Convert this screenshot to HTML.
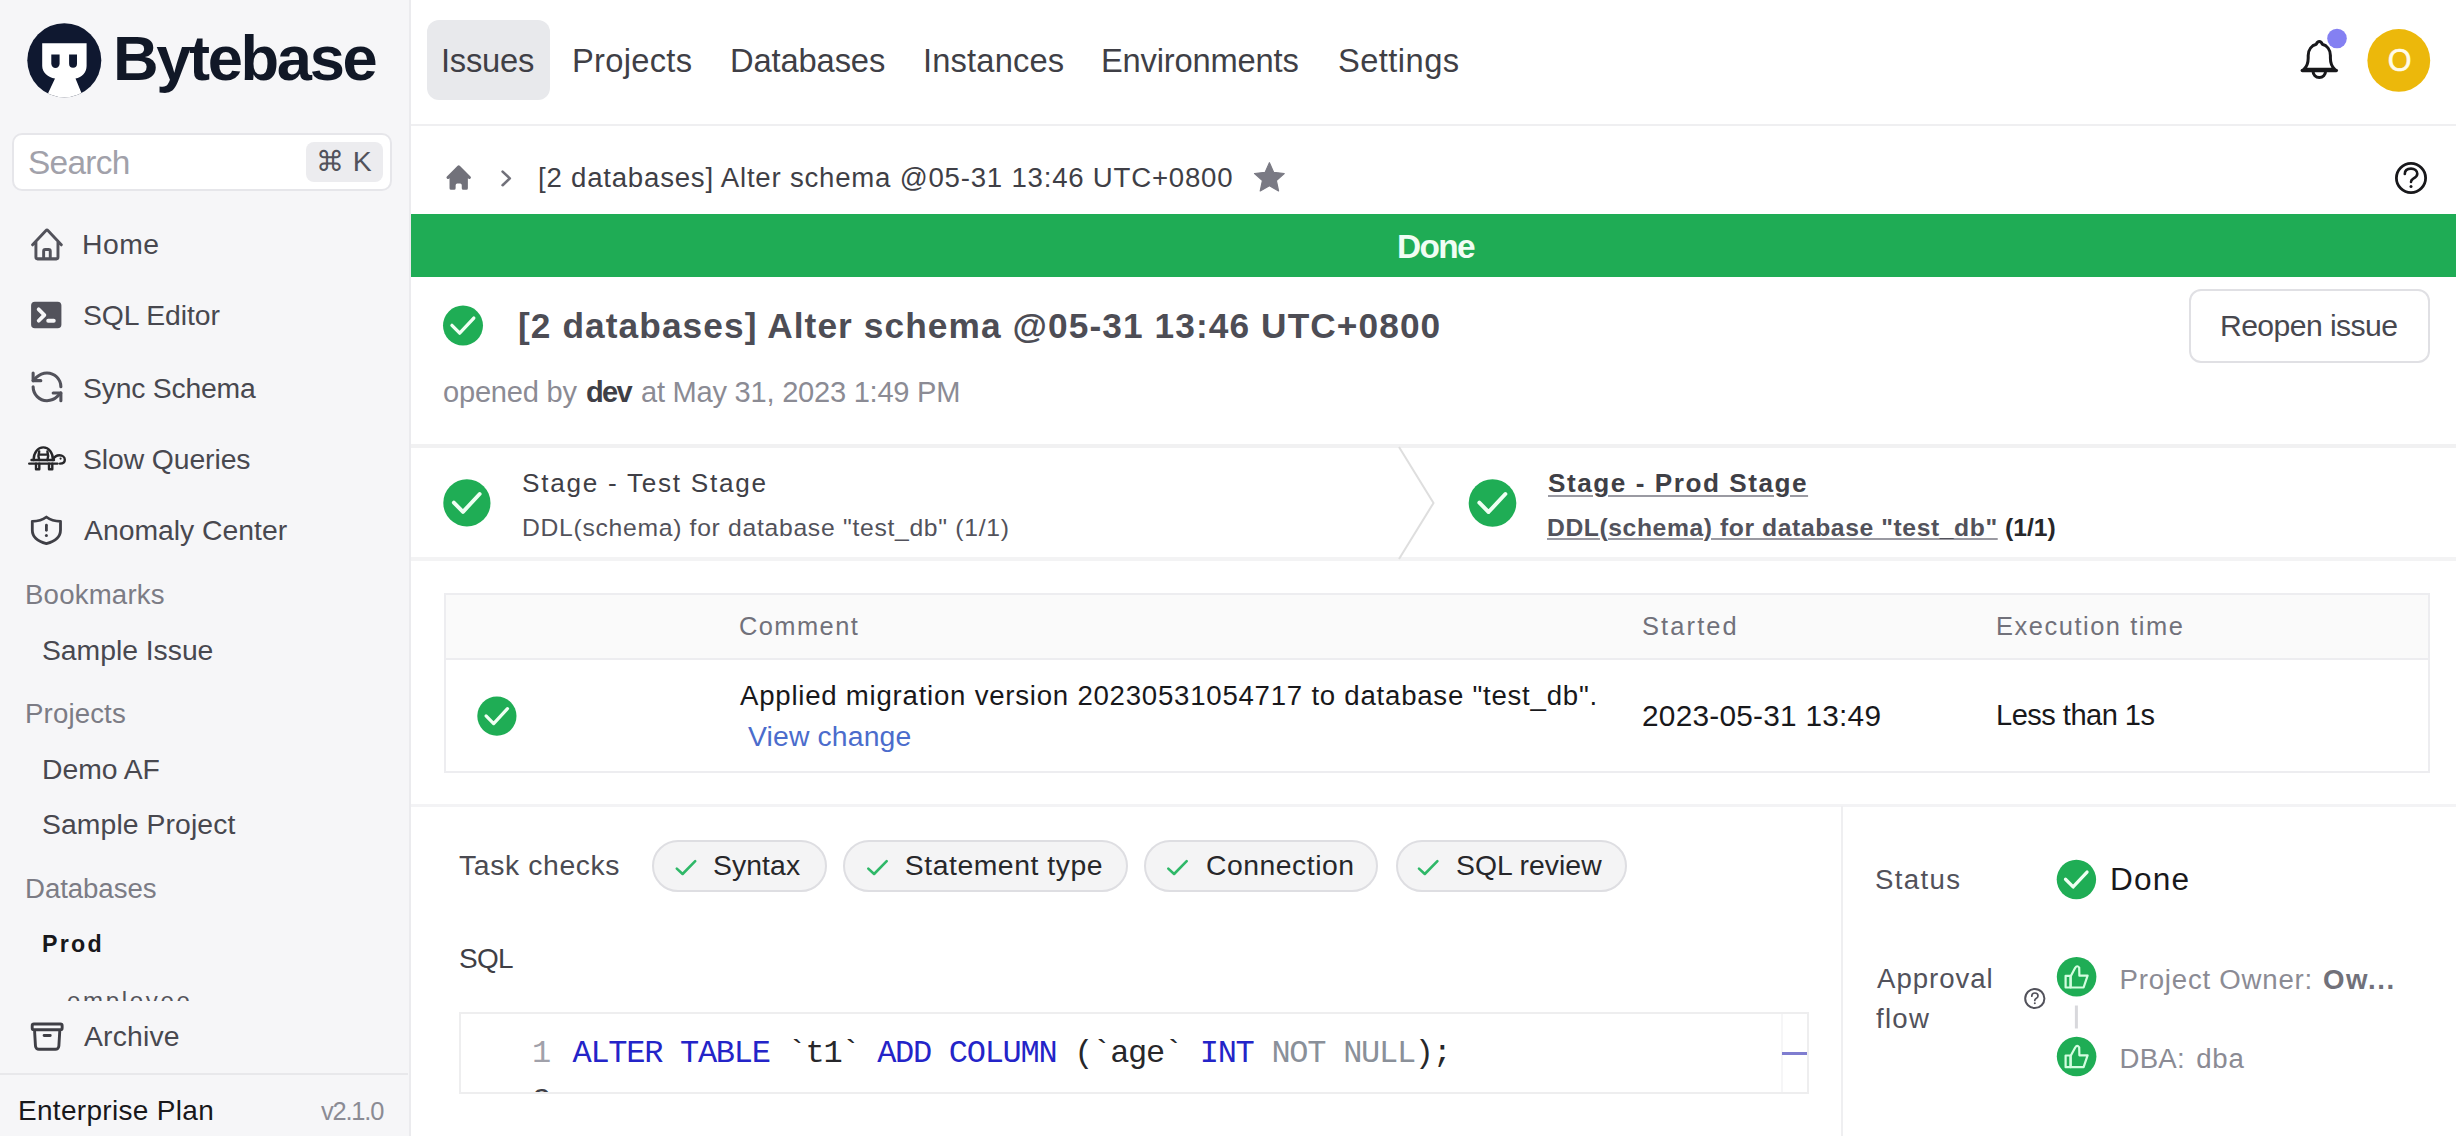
<!DOCTYPE html>
<html><head><meta charset="utf-8"><title>Bytebase</title>
<style>
html,body{margin:0;padding:0;}
body{width:2456px;height:1136px;overflow:hidden;position:relative;background:#fff;font-family:"Liberation Sans",sans-serif;}
.t{position:absolute;white-space:nowrap;line-height:1;z-index:2;}
.b{position:absolute;box-sizing:border-box;}
.mono{font-family:"Liberation Mono",monospace;}
#ov{position:absolute;left:0;top:0;z-index:1;}
</style></head><body>
<!-- sidebar -->
<div class="b" style="left:0;top:0;width:411px;height:1136px;background:#f6f6f8;border-right:2px solid #ebebee;"></div>
<div class="b" style="left:12px;top:133px;width:380px;height:58px;background:#fff;border:2px solid #e6e6ea;border-radius:10px;"></div>
<div class="b" style="left:306px;top:142px;width:77px;height:40px;background:#ececef;border-radius:8px;"></div>
<div class="b" style="left:0;top:1073px;width:408px;height:2px;background:#e8e8eb;"></div>
<!-- header -->
<div class="b" style="left:411px;top:124px;width:2045px;height:2px;background:#efeff1;"></div>
<div class="b" style="left:427px;top:20px;width:123px;height:80px;background:#e8e9ec;border-radius:12px;"></div>
<!-- banner -->
<div class="b" style="left:411px;top:214px;width:2045px;height:63px;background:#1fac55;"></div>
<!-- reopen button -->
<div class="b" style="left:2189px;top:289px;width:241px;height:74px;border:2px solid #e0e0e4;border-radius:12px;"></div>
<!-- stage bar borders -->
<div class="b" style="left:411px;top:444px;width:2045px;height:4px;background:#f1f1f2;"></div>
<div class="b" style="left:411px;top:557px;width:2045px;height:4px;background:#f3f3f4;"></div>
<!-- table -->
<div class="b" style="left:444px;top:593px;width:1986px;height:180px;border:2px solid #ededf0;"></div>
<div class="b" style="left:446px;top:595px;width:1982px;height:63px;background:#fafafa;"></div>
<div class="b" style="left:446px;top:658px;width:1982px;height:2px;background:#ededf0;"></div>
<!-- bottom section -->
<div class="b" style="left:411px;top:804px;width:2045px;height:3px;background:#f3f3f5;"></div>
<div class="b" style="left:1841px;top:806px;width:2px;height:330px;background:#efeff1;"></div>
<!-- pills -->
<div class="b" style="left:652px;top:840px;width:175px;height:52px;background:#f4f4f5;border:2px solid #dedee2;border-radius:26px;"></div>
<div class="b" style="left:843px;top:840px;width:285px;height:52px;background:#f4f4f5;border:2px solid #dedee2;border-radius:26px;"></div>
<div class="b" style="left:1144px;top:840px;width:234px;height:52px;background:#f4f4f5;border:2px solid #dedee2;border-radius:26px;"></div>
<div class="b" style="left:1396px;top:840px;width:231px;height:52px;background:#f4f4f5;border:2px solid #dedee2;border-radius:26px;"></div>
<!-- code box -->
<div class="b" style="left:459px;top:1012px;width:1350px;height:82px;border:2px solid #eeeeef;border-bottom:none;overflow:hidden;">
  <div class="b" style="left:1320px;top:0;width:2px;height:82px;background:#f6f6f7;"></div>
  <div class="b" style="left:1321px;top:38px;width:27px;height:3px;background:#7f7dd0;"></div>
</div>
<div class="b" style="left:459px;top:1092px;width:1350px;height:2px;background:#eeeeef;"></div>
<div id="logo" class="t" style="left:113.00px;top:27.48px;font-size:63.23px;color:#111827;font-weight:700;letter-spacing:-2.357px;">Bytebase</div>
<div id="search" class="t" style="left:28.00px;top:145.70px;font-size:33.43px;color:#a1a1aa;font-weight:400;letter-spacing:-0.700px;">Search</div>
<div id="home" class="t" style="left:82.00px;top:230.01px;font-size:28.34px;color:#48484f;font-weight:400;letter-spacing:0.500px;">Home</div>
<div id="sqled" class="t" style="left:83.00px;top:301.01px;font-size:28.34px;color:#48484f;font-weight:400;letter-spacing:-0.056px;">SQL Editor</div>
<div id="sync" class="t" style="left:83.00px;top:373.51px;font-size:28.34px;color:#48484f;font-weight:400;letter-spacing:-0.200px;">Sync Schema</div>
<div id="slow" class="t" style="left:83.00px;top:445.01px;font-size:28.34px;color:#48484f;font-weight:400;letter-spacing:-0.091px;">Slow Queries</div>
<div id="anom" class="t" style="left:84.00px;top:516.01px;font-size:28.34px;color:#48484f;font-weight:400;letter-spacing:0.000px;">Anomaly Center</div>
<div id="bkm" class="t" style="left:25.00px;top:580.62px;font-size:27.62px;color:#7c7c85;font-weight:400;letter-spacing:0.188px;">Bookmarks</div>
<div id="sissue" class="t" style="left:42.00px;top:636.01px;font-size:28.34px;color:#48484f;font-weight:400;letter-spacing:-0.023px;">Sample Issue</div>
<div id="projh" class="t" style="left:25.00px;top:699.62px;font-size:27.62px;color:#7c7c85;font-weight:400;letter-spacing:0.143px;">Projects</div>
<div id="demoaf" class="t" style="left:42.00px;top:755.01px;font-size:28.34px;color:#48484f;font-weight:400;letter-spacing:-0.042px;">Demo AF</div>
<div id="sproj" class="t" style="left:42.00px;top:810.01px;font-size:28.34px;color:#48484f;font-weight:400;letter-spacing:0.096px;">Sample Project</div>
<div id="dbh" class="t" style="left:25.00px;top:874.62px;font-size:27.62px;color:#7c7c85;font-weight:400;letter-spacing:-0.062px;">Databases</div>
<div id="prod" class="t" style="left:42.00px;top:933.31px;font-size:23.26px;color:#18181b;font-weight:700;letter-spacing:2.250px;">Prod</div>
<div id="archive" class="t" style="left:84.00px;top:1021.76px;font-size:28.34px;color:#48484f;font-weight:400;letter-spacing:0.167px;">Archive</div>
<div id="plan" class="t" style="left:18.00px;top:1097.06px;font-size:27.98px;color:#18181b;font-weight:400;letter-spacing:0.321px;">Enterprise Plan</div>
<div id="ver" class="t" style="left:321.00px;top:1099.22px;font-size:25.44px;color:#8b8b94;font-weight:400;letter-spacing:-1.200px;">v2.1.0</div>
<div id="n1" class="t" style="left:441.00px;top:44.82px;font-size:32.70px;color:#3f3f46;font-weight:400;letter-spacing:-0.250px;">Issues</div>
<div id="n2" class="t" style="left:572.00px;top:44.82px;font-size:32.70px;color:#3f3f46;font-weight:400;letter-spacing:0.286px;">Projects</div>
<div id="n3" class="t" style="left:730.00px;top:44.82px;font-size:32.70px;color:#3f3f46;font-weight:400;letter-spacing:-0.125px;">Databases</div>
<div id="n4" class="t" style="left:923.00px;top:44.82px;font-size:32.70px;color:#3f3f46;font-weight:400;letter-spacing:0.156px;">Instances</div>
<div id="n5" class="t" style="left:1101.00px;top:44.82px;font-size:32.70px;color:#3f3f46;font-weight:400;letter-spacing:-0.182px;">Environments</div>
<div id="n6" class="t" style="left:1338.00px;top:44.82px;font-size:32.70px;color:#3f3f46;font-weight:400;letter-spacing:0.429px;">Settings</div>
<div id="crumb" class="t" style="left:538.00px;top:163.62px;font-size:27.62px;color:#3f3f46;font-weight:400;letter-spacing:0.777px;">[2 databases] Alter schema @05-31 13:46 UTC+0800</div>
<div id="banner" class="t" style="left:1397.00px;top:229.70px;font-size:33.43px;color:#f0fdf4;font-weight:700;letter-spacing:-1.667px;">Done</div>
<div id="title" class="t" style="left:518.00px;top:307.91px;font-size:35.25px;color:#4d4d55;font-weight:700;letter-spacing:1.096px;">[2 databases] Alter schema @05-31 13:46 UTC+0800</div>
<div id="op1" class="t" style="left:443.00px;top:378.14px;font-size:29.07px;color:#8b8b94;font-weight:400;letter-spacing:-0.219px;">opened by</div>
<div id="op2" class="t" style="left:586.00px;top:378.14px;font-size:29.07px;color:#3f3f46;font-weight:700;letter-spacing:-1.750px;">dev</div>
<div id="op3" class="t" style="left:641.00px;top:378.14px;font-size:29.07px;color:#8b8b94;font-weight:400;letter-spacing:-0.239px;">at May 31, 2023 1:49 PM</div>
<div id="reopen" class="t" style="left:2220.00px;top:310.72px;font-size:30.16px;color:#48484f;font-weight:400;letter-spacing:-0.591px;">Reopen issue</div>
<div id="st1" class="t" style="left:522.00px;top:469.85px;font-size:26.16px;color:#3f3f46;font-weight:400;letter-spacing:1.721px;">Stage - Test Stage</div>
<div id="st1d" class="t" style="left:522.00px;top:515.58px;font-size:24.71px;color:#52525b;font-weight:400;letter-spacing:0.699px;">DDL(schema) for database "test_db" (1/1)</div>
<div id="st2" class="t" style="left:1548.00px;top:469.85px;font-size:26.16px;color:#3f3f46;font-weight:700;letter-spacing:1.529px;text-decoration:underline;text-decoration-thickness:2px;text-underline-offset:3px;text-decoration-color:#9a9aa2;">Stage - Prod Stage</div>
<div id="st2d" class="t" style="left:1547.00px;top:515.58px;font-size:24.71px;color:#52525b;font-weight:700;letter-spacing:0.576px;text-decoration:underline;text-decoration-thickness:2px;text-underline-offset:2px;text-decoration-color:#9a9aa2;">DDL(schema) for database "test_db"</div>
<div id="st2n" class="t" style="left:2005.00px;top:515.58px;font-size:24.71px;color:#27272a;font-weight:700;letter-spacing:0.000px;">(1/1)</div>
<div id="th1" class="t" style="left:739.00px;top:613.97px;font-size:25.44px;color:#71717a;font-weight:400;letter-spacing:1.417px;">Comment</div>
<div id="th2" class="t" style="left:1642.00px;top:613.97px;font-size:25.44px;color:#71717a;font-weight:400;letter-spacing:2.125px;">Started</div>
<div id="th3" class="t" style="left:1996.00px;top:613.97px;font-size:25.44px;color:#71717a;font-weight:400;letter-spacing:1.538px;">Execution time</div>
<div id="td1" class="t" style="left:740.00px;top:682.12px;font-size:27.62px;color:#18181b;font-weight:400;letter-spacing:0.758px;">Applied migration version 20230531054717 to database "test_db".</div>
<div id="td1b" class="t" style="left:748.00px;top:721.51px;font-size:28.34px;color:#4b6ccc;font-weight:400;letter-spacing:0.150px;">View change</div>
<div id="td2" class="t" style="left:1642.00px;top:700.78px;font-size:29.80px;color:#18181b;font-weight:400;letter-spacing:0.250px;">2023-05-31 13:49</div>
<div id="td3" class="t" style="left:1996.00px;top:701.39px;font-size:29.07px;color:#18181b;font-weight:400;letter-spacing:-0.523px;">Less than 1s</div>
<div id="tc" class="t" style="left:459.00px;top:851.01px;font-size:28.34px;color:#4b4b52;font-weight:400;letter-spacing:0.625px;">Task checks</div>
<div id="p1" class="t" style="left:713.00px;top:851.01px;font-size:28.34px;color:#27272a;font-weight:400;letter-spacing:0.100px;">Syntax</div>
<div id="p2" class="t" style="left:904.80px;top:851.01px;font-size:28.34px;color:#27272a;font-weight:400;letter-spacing:0.554px;">Statement type</div>
<div id="p3" class="t" style="left:1206.00px;top:851.01px;font-size:28.34px;color:#27272a;font-weight:400;letter-spacing:0.528px;">Connection</div>
<div id="p4" class="t" style="left:1456.00px;top:851.01px;font-size:28.34px;color:#27272a;font-weight:400;letter-spacing:0.028px;">SQL review</div>
<div id="sql" class="t" style="left:459.00px;top:945.06px;font-size:27.98px;color:#3f3f46;font-weight:400;letter-spacing:-0.750px;">SQL</div>
<div id="status" class="t" style="left:1875.00px;top:866.12px;font-size:27.62px;color:#52525b;font-weight:400;letter-spacing:1.350px;">Status</div>
<div id="done" class="t" style="left:2110.00px;top:863.99px;font-size:31.61px;color:#18181b;font-weight:400;letter-spacing:1.167px;">Done</div>
<div id="appr" class="t" style="left:1877.00px;top:964.87px;font-size:27.62px;color:#52525b;font-weight:400;letter-spacing:0.964px;">Approval</div>
<div id="flow" class="t" style="left:1876.00px;top:1004.87px;font-size:27.62px;color:#52525b;font-weight:400;letter-spacing:1.250px;">flow</div>
<div id="po1" class="t" style="left:2119.60px;top:965.62px;font-size:27.62px;color:#8b8b94;font-weight:400;letter-spacing:0.769px;">Project Owner:</div>
<div id="po2" class="t" style="left:2323.00px;top:965.62px;font-size:27.62px;color:#71717a;font-weight:700;letter-spacing:1.562px;">Ow...</div>
<div id="dba1" class="t" style="left:2119.60px;top:1045.02px;font-size:27.62px;color:#8b8b94;font-weight:400;letter-spacing:0.200px;">DBA:</div>
<div id="dba2" class="t" style="left:2196.20px;top:1045.02px;font-size:27.62px;color:#8b8b94;font-weight:400;letter-spacing:0.800px;">dba</div>
<div id="kbd" class="t" style="left:316.00px;top:147.01px;font-size:28.34px;color:#52525b;font-weight:400;letter-spacing:0.500px;">⌘ K</div>
<div id="avatar" class="t" style="left:2387.80px;top:45.16px;font-size:30.52px;color:#fffbea;font-weight:400;letter-spacing:0.000px;-webkit-text-stroke:0.6px #fffbea;">O</div>
<div id="employee" class="t" style="left:67.00px;top:988.54px;font-size:24.05px;color:#55555c;font-weight:400;letter-spacing:2.643px;">employee</div>
<div class="t mono" style="left:572.5px;top:1038.48px;font-size:32.000px;letter-spacing:-1.283px"><span style="color:#2424c8">ALTER</span><span style="color:#000">&nbsp;</span><span style="color:#2424c8">TABLE</span><span style="color:#27272a">&nbsp;`t1`&nbsp;</span><span style="color:#2424c8">ADD</span><span style="color:#000">&nbsp;</span><span style="color:#2424c8">COLUMN</span><span style="color:#27272a">&nbsp;(`age`&nbsp;</span><span style="color:#2424c8">INT</span><span style="color:#000">&nbsp;</span><span style="color:#8a9099">NOT&nbsp;NULL</span><span style="color:#27272a">);</span></div><div class="t mono" style="left:532px;top:1038.48px;font-size:32.000px;color:#a1a1aa">1</div><div class="b" style="left:520px;top:1080px;width:60px;height:12px;overflow:hidden;z-index:2"><div class="t mono" style="left:12px;top:5.98px;font-size:32.000px;color:#3f3f46">2</div></div>
<div class="b" style="left:0;top:1001px;width:408px;height:14px;background:#f6f6f8;z-index:3;"></div>
<svg id="ov" width="2456" height="1136" viewBox="0 0 2456 1136">
<!-- logo -->
<defs><clipPath id="lc"><circle cx="64.3" cy="60.3" r="37"/></clipPath></defs>
<circle cx="64.3" cy="60.3" r="37" fill="#0f1830"/>
<path clip-path="url(#lc)" d="M42.2,43.2 H86.6 V66 C86.6,72.5 82,77.5 75.5,78.5 L86,104 H43 L55,78.5 C48,77.5 42.2,72.5 42.2,66 Z" fill="#ffffff"/>
<path d="M51.3,54.6 H59.6 V63.8 A4.15,4.15 0 0 1 51.3,63.8 Z" fill="#0f1830"/>
<path d="M69.1,54.6 H77 V63.8 A3.95,3.95 0 0 1 69.1,63.8 Z" fill="#0f1830"/>
<!-- sidebar icons -->
<svg x="29.3" y="226" width="35.3" height="37.5" viewBox="0 0 24 24" preserveAspectRatio="none" fill="none" stroke="#52525b" stroke-width="2" stroke-linecap="round" stroke-linejoin="round"><path d="m2.25 12 8.954-8.955c.44-.439 1.152-.439 1.591 0L21.75 12M4.5 9.75v10.125c0 .621.504 1.125 1.125 1.125H9.75v-4.875c0-.621.504-1.125 1.125-1.125h2.25c.621 0 1.125.504 1.125 1.125V21h4.125c.621 0 1.125-.504 1.125-1.125V9.75M8.25 21h8.25"/></svg>
<svg x="27.3" y="296.1" width="37.9" height="37.9" viewBox="0 0 20 20" fill="#52525b"><path fill-rule="evenodd" d="M2 5a2 2 0 012-2h12a2 2 0 012 2v10a2 2 0 01-2 2H4a2 2 0 01-2-2V5zm3.293 1.293a1 1 0 011.414 0l3 3a1 1 0 010 1.414l-3 3a1 1 0 01-1.414-1.414L7.586 10 5.293 7.707a1 1 0 010-1.414zM11 12a1 1 0 100 2h3a1 1 0 100-2h-3z"/></svg>
<svg x="28.5" y="368.3" width="37" height="37" viewBox="0 0 24 24" fill="none" stroke="#52525b" stroke-width="2" stroke-linecap="round" stroke-linejoin="round"><path d="M21 12a9 9 0 0 0-9-9 9.75 9.75 0 0 0-6.74 2.74L3 8"/><path d="M3 3v5h5"/><path d="M3 12a9 9 0 0 0 9 9 9.75 9.75 0 0 0 6.74-2.74L21 16"/><path d="M16 16h5v5"/></svg>
<g fill="none" stroke="#27272a" stroke-width="2.4" stroke-linecap="round" stroke-linejoin="round">
 <path d="M33.6,460 C33.6,452.5 37.8,447.4 43.3,447.4 C48.8,447.4 53,452.5 53,460"/>
 <path d="M31.5,460 H54"/>
 <path d="M39.2,451.5 Q37.8,455.5 39.2,460 M47.4,451.5 Q48.8,455.5 47.4,460 M39.2,454.6 H47.4"/>
 <path d="M29.2,463.6 H57.5"/>
 <path d="M53,459.5 C54.5,456.5 56.5,455.3 59.5,455.3 C62.6,455.3 64.8,457.3 64.8,459.8 C64.8,462.2 62.8,463.6 60,463.6"/>
 <path d="M36,463.6 V469.3 H39.3 V463.6 M49,463.6 V469.3 H52.3 V463.6"/>
</g>
<circle cx="60.6" cy="458.6" r="1.1" fill="#27272a"/>
<g fill="none" stroke="#3f3f46" stroke-width="2.8" stroke-linecap="round" stroke-linejoin="round">
 <path d="M46.4,517 C42.5,520 37.5,521.3 32.3,521.3 V530 C32.3,537 38,541.5 46.4,543.6 C54.8,541.5 60.5,537 60.5,530 V521.3 C55.3,521.3 50.3,520 46.4,517 Z"/>
 <path d="M46.4,525.2 V530.3"/>
</g>
<circle cx="46.4" cy="535.6" r="1.5" fill="#3f3f46"/>
<svg x="28.75" y="1018.2" width="36.84" height="36.84" viewBox="0 0 24 24" fill="none" stroke="#3f3f46" stroke-width="1.9" stroke-linecap="round" stroke-linejoin="round"><path d="m20.25 7.5-.625 10.632a2.25 2.25 0 0 1-2.247 2.118H6.622a2.25 2.25 0 0 1-2.247-2.118L3.75 7.5M10 11.25h4M3.375 7.5h17.25c.621 0 1.125-.504 1.125-1.125v-1.5c0-.621-.504-1.125-1.125-1.125H3.375c-.621 0-1.125.504-1.125 1.125v1.5c0 .621.504 1.125 1.125 1.125Z"/></svg>
<!-- header icons -->
<g fill="none" stroke="#18181b" stroke-width="3" stroke-linecap="round" stroke-linejoin="round">
 <path d="M2303.8,69.3 C2306.8,66.8 2308.2,62.8 2308.2,58 V55.5 C2308.2,49.5 2311.8,45.5 2316.3,44.3 C2317,42.3 2318,41.6 2319.3,41.6 C2320.6,41.6 2321.6,42.3 2322.3,44.3 C2326.8,45.5 2330.4,49.5 2330.4,55.5 V58 C2330.4,62.8 2331.8,66.8 2334.8,69.3 Z"/>
 <path d="M2313,71 A6.3,6.6 0 0 0 2325.6,71"/>
</g>
<path d="M2302.3,70.5 H2336.3" stroke="#18181b" stroke-width="3.4" stroke-linecap="round"/>
<circle cx="2337" cy="38.5" r="9.8" fill="#8480f2"/>
<circle cx="2398.8" cy="60.4" r="31.4" fill="#ecb80b"/>
<!-- breadcrumb icons -->
<svg x="443.4" y="162.2" width="30.6" height="30.6" viewBox="0 0 20 20" fill="#71717a"><path d="M10.707 2.293a1 1 0 00-1.414 0l-7 7a1 1 0 001.414 1.414L4 10.414V17a1 1 0 001 1h2a1 1 0 001-1v-2a1 1 0 011-1h2a1 1 0 011 1v2a1 1 0 001 1h2a1 1 0 001-1v-6.586l.293.293a1 1 0 001.414-1.414l-7-7z"/></svg>
<path d="M502.6,171.6 L509.8,178.4 L502.6,185.2" fill="none" stroke="#71717a" stroke-width="2.6" stroke-linecap="round" stroke-linejoin="round"/>
<path id="star" fill="#7a7a84" stroke="#7a7a84" stroke-width="1.2" stroke-linejoin="round" d="M1269.40,162.70 L1273.71,172.37 L1284.24,173.48 L1276.37,180.57 L1278.57,190.92 L1269.40,185.63 L1260.23,190.92 L1262.43,180.57 L1254.56,173.48 L1265.09,172.37 Z"/>
<circle cx="2411" cy="178" r="14.6" fill="none" stroke="#18181b" stroke-width="2.8"/>
<path d="M2404.8,174 C2404.8,170.4 2407.5,168.6 2411,168.6 C2414.5,168.6 2417.3,170.6 2417.3,173.8 C2417.3,176.8 2415,177.8 2413,178.8 C2411.6,179.6 2411,180.4 2411,182" fill="none" stroke="#18181b" stroke-width="2.6" stroke-linecap="round"/>
<circle cx="2411" cy="186.6" r="1.5" fill="#18181b"/>
<path d="M1399,447 L1433.5,503 L1399,559" fill="none" stroke="#dedede" stroke-width="2"/>
<circle cx="463.00" cy="325.60" r="20.00" fill="#1fad55"/><path d="M451.94,325.34 L459.68,333.18 L473.80,318.02" fill="none" stroke="#effff3" stroke-width="3.30" stroke-linecap="round" stroke-linejoin="round"/><circle cx="466.90" cy="502.90" r="23.60" fill="#1fad55"/><path d="M453.85,502.59 L462.98,511.84 L479.64,493.96" fill="none" stroke="#effff3" stroke-width="3.89" stroke-linecap="round" stroke-linejoin="round"/><circle cx="1492.50" cy="503.00" r="23.80" fill="#1fad55"/><path d="M1479.34,502.69 L1488.55,512.02 L1505.35,493.98" fill="none" stroke="#effff3" stroke-width="3.93" stroke-linecap="round" stroke-linejoin="round"/><circle cx="496.90" cy="716.10" r="19.60" fill="#1fad55"/><path d="M486.06,715.85 L493.65,723.53 L507.48,708.67" fill="none" stroke="#effff3" stroke-width="3.23" stroke-linecap="round" stroke-linejoin="round"/><circle cx="2076.40" cy="879.50" r="19.70" fill="#1fad55"/><path d="M2065.51,879.24 L2073.13,886.97 L2087.04,872.03" fill="none" stroke="#effff3" stroke-width="3.25" stroke-linecap="round" stroke-linejoin="round"/><circle cx="2076.60" cy="976.80" r="19.80" fill="#1fad55"/><g fill="none" stroke="#d4fde0" stroke-width="2.2" stroke-linejoin="round"><path d="M2065.60,975.80 H2070.60 V987.50 H2065.60 Z"/><path d="M2070.60,976.40 L2075.20,967.80 Q2077.20,964.80 2079.20,967.60 L2079.40,975.60 H2087.60 L2083.60,987.50 H2070.60 Z"/></g><circle cx="2076.60" cy="1056.50" r="19.80" fill="#1fad55"/><g fill="none" stroke="#d4fde0" stroke-width="2.2" stroke-linejoin="round"><path d="M2065.60,1055.50 H2070.60 V1067.20 H2065.60 Z"/><path d="M2070.60,1056.10 L2075.20,1047.50 Q2077.20,1044.50 2079.20,1047.30 L2079.40,1055.30 H2087.60 L2083.60,1067.20 H2070.60 Z"/></g>
<!-- pill checks -->
<g fill="none" stroke="#2fb868" stroke-width="2.6" stroke-linecap="round" stroke-linejoin="round">
 <path d="M676.8,868.6 L682.6,874 L695.2,861.2"/>
 <path d="M868.3,868.6 L874.1,874 L886.7,861.2"/>
 <path d="M1168.3,868.6 L1174.1,874 L1186.7,861.2"/>
 <path d="M1419,868.6 L1424.8,874 L1437.4,861.2"/>
</g>
<!-- approval -->
<circle cx="2034.8" cy="998.5" r="9.6" fill="none" stroke="#52525b" stroke-width="2"/>
<path d="M2031.8,996.2 C2031.8,994 2033.2,993 2034.9,993 C2036.7,993 2038,994.1 2038,995.9 C2038,997.6 2036.8,998.1 2035.8,998.7 C2035.1,999.1 2034.8,999.6 2034.8,1000.5" fill="none" stroke="#52525b" stroke-width="1.7" stroke-linecap="round"/>
<circle cx="2034.8" cy="1003.3" r="1" fill="#52525b"/>
<path d="M2076.4,1005.5 V1028.5" stroke="#d8d8dc" stroke-width="3"/>

</svg>
</body></html>
